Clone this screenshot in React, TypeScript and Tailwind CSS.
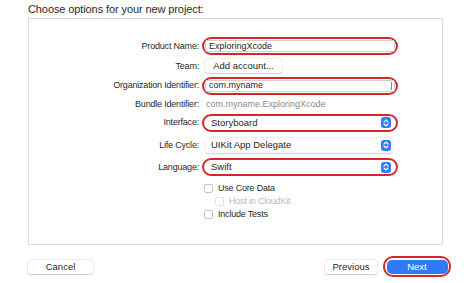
import React from "react";

const font = { fontFamily: '"Liberation Sans", Arial, sans-serif' };

function Stepper() {
  return (
    <div className="w-[10px] h-[11px] rounded-[3px] bg-[#2f7cf6] flex items-center justify-center">
      <svg width="6" height="8" viewBox="0 0 6 8" fill="none">
        <path d="M1 3 L3 1 L5 3" stroke="white" strokeWidth="1.1" strokeLinecap="round" strokeLinejoin="round" />
        <path d="M1 5 L3 7 L5 5" stroke="white" strokeWidth="1.1" strokeLinecap="round" strokeLinejoin="round" />
      </svg>
    </div>
  );
}

function Label({ children }: { children: React.ReactNode }) {
  return (
    <div className="text-right text-[9px] tracking-[-0.2px] text-[#2a2a2a] leading-none">
      {children}
    </div>
  );
}

function Ring({ children, h }: { children: React.ReactNode; h: string }) {
  return (
    <div className={`w-[196px] ${h} rounded-[9px] border-2 border-[#d3262d] p-[1px] flex`}>
      {children}
    </div>
  );
}

function Checkbox({ label, disabled }: { label: string; disabled?: boolean }) {
  return (
    <div className="flex items-center gap-[5px] h-[13px]">
      <div
        className={`w-[9px] h-[9px] rounded-[2px] border bg-white ${
          disabled ? "border-[#e4e4e4]" : "border-[#c4c4c4]"
        }`}
      />
      <span className={`text-[9px] tracking-[-0.2px] leading-none ${disabled ? "text-[#b9b9b9]" : "text-[#2a2a2a]"}`}>
        {label}
      </span>
    </div>
  );
}

export default function App() {
  return (
    <div className="w-[474px] h-[283px] bg-white flex flex-col" style={font}>
      {/* Title */}
      <div className="h-[18px] pl-[28px] flex items-center text-[11px] text-[#2a2a2a] tracking-[-0.1px]">
        Choose options for your new project:
      </div>

      {/* Options panel */}
      <div className="ml-[28px] w-[415px] h-[227px] border border-[#dcdcdc] bg-white pt-[17px]">
        <div className="grid grid-cols-[170px_1fr] gap-x-[3px]">
          <div className="h-[20px] flex items-center justify-end"><Label>Product Name:</Label></div>
          <div className="h-[20px] flex items-center">
            <Ring h="h-[18px]">
              <div className="flex-1 bg-white border border-[#cfcfcf] rounded-[2px] flex items-center pl-[3px] text-[9px] text-[#1f1f1f] leading-none">
                ExploringXcode
              </div>
            </Ring>
          </div>

          <div className="h-[20px] flex items-center justify-end"><Label>Team:</Label></div>
          <div className="h-[20px] flex items-center pl-[3px]">
            <div className="w-[77px] h-[14px] bg-white rounded-[3px] shadow-[0_0_0_0.5px_rgba(0,0,0,0.12),0_0.5px_1px_rgba(0,0,0,0.15)] flex items-center justify-center text-[9.5px] text-[#1f1f1f] leading-none">
              Add account...
            </div>
          </div>

          <div className="h-[19px] flex items-center justify-end"><Label>Organization Identifier:</Label></div>
          <div className="h-[19px] flex items-center">
            <Ring h="h-[18px]">
              <div className="flex-1 bg-white border border-[#cfcfcf] rounded-[2px] flex items-center pl-[3px] text-[9px] text-[#1f1f1f] leading-none relative">
                com.myname
                <div className="absolute right-[2px] top-[1px] bottom-[1px] w-[1.5px] bg-[#4a8ef5]" />
              </div>
            </Ring>
          </div>

          <div className="h-[18px] flex items-center justify-end"><Label>Bundle Identifier:</Label></div>
          <div className="h-[18px] flex items-center pl-[4px] text-[9px] text-[#8a8a8a] leading-none">
            com.myname.ExploringXcode
          </div>

          <div className="h-[19px] flex items-center justify-end"><Label>Interface:</Label></div>
          <div className="h-[19px] flex items-center">
            <Ring h="h-[18px]">
              <div className="flex-1 flex items-center justify-between pl-[6px] pr-[4px] text-[9.5px] text-[#1f1f1f] leading-none">
                Storyboard
                <Stepper />
              </div>
            </Ring>
          </div>

          <div className="h-[26px] flex items-center justify-end"><Label>Life Cycle:</Label></div>
          <div className="h-[26px] flex items-center pl-[3px]">
            <div className="w-[188px] h-[15px] bg-white rounded-[3px] shadow-[0_0_0_0.5px_rgba(0,0,0,0.08),0_0.5px_1.5px_rgba(0,0,0,0.15)] flex items-center justify-between pl-[6px] pr-[2px] text-[9.5px] text-[#1f1f1f] leading-none">
              UIKit App Delegate
              <Stepper />
            </div>
          </div>

          <div className="h-[18px] flex items-center justify-end"><Label>Language:</Label></div>
          <div className="h-[18px] flex items-center">
            <Ring h="h-[18px]">
              <div className="flex-1 flex items-center justify-between pl-[6px] pr-[4px] text-[9.5px] text-[#1f1f1f] leading-none">
                Swift
                <Stepper />
              </div>
            </Ring>
          </div>
        </div>

        <div className="mt-[6px] ml-[175px] flex flex-col">
          <Checkbox label="Use Core Data" />
          <div className="ml-[11px]">
            <Checkbox label="Host in CloudKit" disabled />
          </div>
          <Checkbox label="Include Tests" />
        </div>
      </div>

      {/* Footer buttons */}
      <div className="flex items-center justify-between pl-[28px] pr-[23px] mt-[11px] h-[21px]">
        <div className="w-[65px] h-[14px] bg-white rounded-[3px] shadow-[0_0_0_0.5px_rgba(0,0,0,0.1),0_0.5px_1.5px_rgba(0,0,0,0.15)] flex items-center justify-center text-[9.5px] text-[#1f1f1f] leading-none">
          Cancel
        </div>
        <div className="flex items-center gap-[6px]">
          <div className="w-[52px] h-[14px] bg-white rounded-[3px] shadow-[0_0_0_0.5px_rgba(0,0,0,0.1),0_0.5px_1.5px_rgba(0,0,0,0.15)] flex items-center justify-center text-[9.5px] text-[#1f1f1f] leading-none">
            Previous
          </div>
          <div className="w-[68px] h-[21px] rounded-[10px] border-2 border-[#d3262d] p-[1.5px] flex">
            <div className="flex-1 bg-[#2e7bf6] rounded-[5px] flex items-center justify-center text-[9.5px] text-white leading-none">
              Next
            </div>
          </div>
        </div>
      </div>
    </div>
  );
}
